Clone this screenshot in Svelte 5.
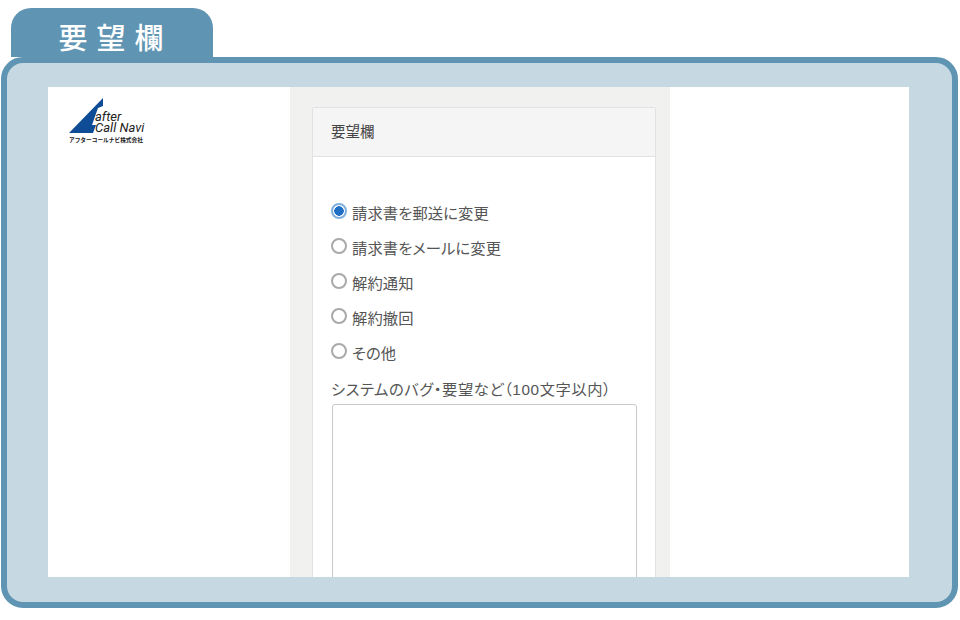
<script>
  const options = ['請求書を郵送に変更', '請求書をメールに変更', '解約通知', '解約撤回', 'その他'];
  let selected = $state(options[0]);
</script>

<main class="page">
  <div class="tab">要望欄</div>
  <section class="panel">
    <div class="shot">
      <div class="logo-col">
        <div class="logo">
          <svg class="mark" width="36" height="36" viewBox="0 0 36 36" aria-hidden="true">
            <path d="M34 0 L34 8 L29 10 L23 27 L27 27 L24 35 L0 35 Z" fill="#0f4c96" />
          </svg>
          <div class="wordmark"><span>after</span><span>Call Navi</span></div>
          <div class="company">アフターコールナビ株式会社</div>
        </div>
      </div>

      <div class="gutter">
        <div class="card">
          <header class="card-head">要望欄</header>
          <div class="card-body">
            {#each options as option}
              <label class="option">
                <input type="radio" name="request" value={option} bind:group={selected} />
                <span>{option}</span>
              </label>
            {/each}
            <label class="note-label" for="note">システムのバグ・要望など（100文字以内）</label>
            <textarea id="note"></textarea>
          </div>
        </div>
      </div>

      <div class="right-col"></div>
    </div>
  </section>
</main>

<style>
  :global(body) {
    margin: 0;
    background: #fff;
  }
  .page {
    width: 960px;
    height: 620px;
    padding: 8px 0 0 1px;
    box-sizing: border-box;
    overflow: hidden;
    font-family: "Liberation Sans", "Noto Sans CJK JP", sans-serif;
  }
  .tab {
    width: 202px;
    height: 49px;
    margin-left: 10px;
    padding-left: 7px;
    box-sizing: border-box;
    background: #5f95b3;
    border-radius: 20px 20px 0 0;
    color: #fff;
    font-family: "Noto Sans CJK JP", sans-serif;
    font-size: 29px;
    font-weight: 500;
    line-height: 57px;
    letter-spacing: 9px;
    text-align: center;
  }
  .panel {
    width: 957px;
    height: 551px;
    box-sizing: border-box;
    padding: 24px 43px 25px 41px;
    background: #c6d9e2;
    border: 6px solid #5f95b3;
    border-radius: 22px;
  }
  .shot {
    display: grid;
    grid-template-columns: 242px 380px 1fr;
    height: 490px;
    overflow: hidden;
    background: #fff;
  }
  .logo-col {
    padding: 11px 0 0 20px;
  }
  .logo {
    position: relative;
    width: 76px;
    height: 47px;
  }
  .mark {
    position: absolute;
    left: 1px;
    top: 0;
  }
  .wordmark {
    position: absolute;
    left: 27px;
    top: 13px;
    display: flex;
    flex-direction: column;
    color: #222;
    font-family: Roboto, "Liberation Sans", sans-serif;
    font-size: 13px;
    font-style: italic;
    line-height: 11px;
    white-space: nowrap;
  }
  .company {
    position: absolute;
    left: 1px;
    top: 38px;
    color: #222;
    font-family: "Noto Sans CJK JP", sans-serif;
    font-size: 5.7px;
    font-weight: 700;
    line-height: 8px;
    white-space: nowrap;
  }
  .gutter {
    padding: 20px 14px 0 22px;
    background: #f1f1f0;
  }
  .card {
    height: 600px;
    background: #fff;
    border: 1px solid #e2e2e2;
    border-radius: 2px;
  }
  .card-head {
    height: 48px;
    padding-left: 18px;
    background: #f5f5f5;
    border-bottom: 1px solid #e2e2e2;
    color: #444;
    font-size: 14.5px;
    line-height: 48px;
  }
  .card-body {
    display: flex;
    flex-direction: column;
    padding: 36px 18px 0;
    color: #555;
    font-feature-settings: "palt";
  }
  .option {
    display: flex;
    align-items: center;
    gap: 5px;
    height: 35px;
    font-size: 15.3px;
  }
  .option span {
    padding-top: 2px;
    letter-spacing: 0.1px;
  }
  .option input {
    appearance: none;
    width: 16px;
    height: 16px;
    margin: 0;
    box-sizing: border-box;
    background: #fff;
    border: 2px solid #a9a9a9;
    border-radius: 50%;
  }
  .option input:checked {
    border-color: #7fb0dc;
    background: radial-gradient(circle, #1f6fc4 0 4.5px, #fff 5px);
  }
  .note-label {
    margin-top: 10px;
    font-size: 15.3px;
    letter-spacing: 0.58px;
    line-height: 24px;
    white-space: nowrap;
  }
  textarea {
    display: block;
    width: 305px;
    height: 300px;
    margin: 2px 0 0 1px;
    padding: 0;
    box-sizing: border-box;
    background: #fff;
    border: 1px solid #c9c9c9;
    border-radius: 3px;
    resize: none;
  }
</style>
